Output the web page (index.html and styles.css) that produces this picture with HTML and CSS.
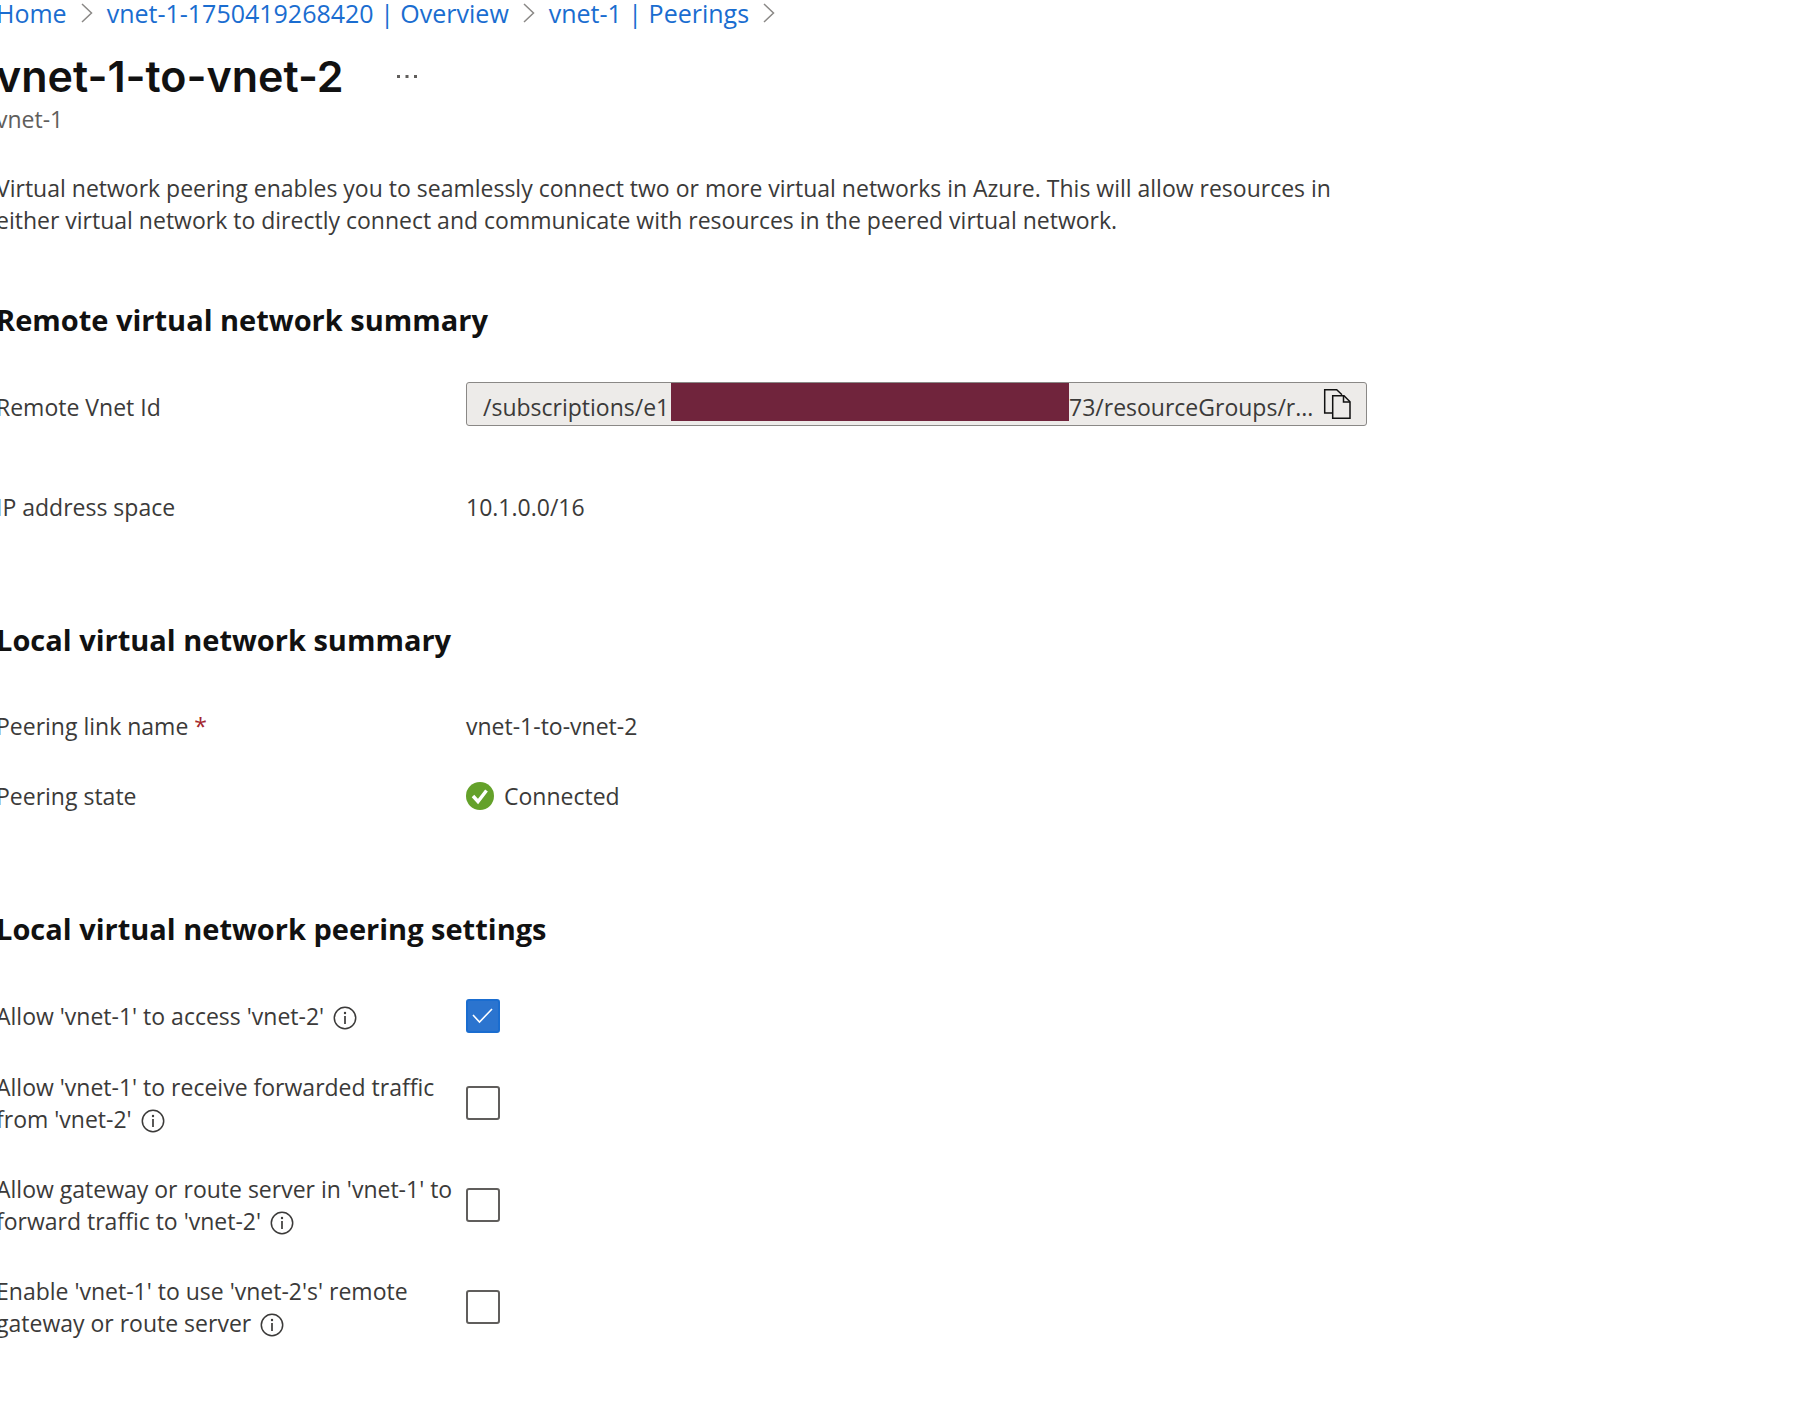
FILE: index.html
```html
<!DOCTYPE html>
<html lang="en">
<head>
<meta charset="utf-8">
<meta name="viewport" content="width=device-width, initial-scale=1">
<title>vnet-1-to-vnet-2</title>
<link rel="stylesheet" href="styles.css">
</head>
<body>
<svg class="defs" aria-hidden="true">
  <symbol id="chevron" viewBox="0 0 12 20"><path d="M1 1l9.500 9L1 19" fill="none" stroke="#8a8886" stroke-width="1.500"/></symbol>
  <symbol id="info" viewBox="0 0 24 24"><circle cx="12" cy="12" r="10.700" fill="none" stroke="#3b3a39" stroke-width="1.500"/><path d="M12 10v8" stroke="#3b3a39" stroke-width="1.700"/><circle cx="12" cy="7" r="1.200" fill="#3b3a39"/></symbol>
</svg>
<div class="blade">
  <nav class="breadcrumb" aria-label="Breadcrumb">
    <a href="#">Home</a>
    <svg class="chevron"><use href="#chevron"/></svg>
    <a href="#">vnet-1-1750419268420 | Overview</a>
    <svg class="chevron"><use href="#chevron"/></svg>
    <a href="#">vnet-1 | Peerings</a>
    <svg class="chevron"><use href="#chevron"/></svg>
  </nav>
  <header class="header">
    <div class="title-row">
      <h1 class="title">vnet-1-to-vnet-2</h1>
      <button class="more" type="button" aria-label="More">
        <svg width="22" height="4" viewBox="0 0 22 4"><path d="M1 1h3v3H1zM9.500 1h3v3h-3zM18 1h3v3h-3z" fill="#605e5c"/></svg>
      </button>
    </div>
    <p class="subtitle">vnet-1</p>
  </header>
  <main>
    <p class="description">Virtual network peering enables you to seamlessly connect two or more virtual networks in Azure. This will allow resources in either virtual network to directly connect and communicate with resources in the peered virtual network.</p>

    <section class="section section-first">
      <h2 class="heading">Remote virtual network summary</h2>
      <div class="rows rows-remote">
        <div class="row">
          <label class="label" for="vnet-id">Remote Vnet Id</label>
          <div class="field">
            <input class="id-start" id="vnet-id" type="text" value="/subscriptions/e1" readonly>
            <span class="redacted"></span>
            <input class="id-end" type="text" value="73/resourceGroups/r..." aria-label="Remote Vnet Id, end" readonly>
            <button class="copy" type="button" aria-label="Copy">
              <svg width="28" height="32" viewBox="0 0 28 32" fill="none" stroke="#111" stroke-width="1.500"><path d="M9.500 25H1.700V1.700h12l5.300 5"/><path d="M9.700 7.700h11.300l6 6v16.500H9.700z"/><path d="M20.500 8v6H27"/></svg>
            </button>
          </div>
        </div>
        <div class="row">
          <span class="label">IP address space</span>
          <span>10.1.0.0/16</span>
        </div>
      </div>
    </section>

    <section class="section">
      <h2 class="heading">Local virtual network summary</h2>
      <div class="rows">
        <div class="row">
          <span class="label">Peering link name <span class="required">*</span></span>
          <span>vnet-1-to-vnet-2</span>
        </div>
        <div class="row">
          <span class="label">Peering state</span>
          <span class="status">
            <svg width="28" height="28" viewBox="0 0 28 28"><circle cx="14" cy="14" r="14" fill="#64a12a"/><path d="M7 14l5 5.500 8.500-11" fill="none" stroke="#fff" stroke-width="3.400"/></svg>
            Connected
          </span>
        </div>
      </div>
    </section>

    <section class="section">
      <h2 class="heading">Local virtual network peering settings</h2>
      <div class="rows">
        <div class="row">
          <label class="label" for="access">Allow 'vnet-1' to access 'vnet-2' <svg class="info"><use href="#info"/></svg></label>
          <input class="check" id="access" type="checkbox" checked>
        </div>
        <div class="row">
          <label class="label" for="receive">Allow 'vnet-1' to receive forwarded traffic from 'vnet-2' <svg class="info"><use href="#info"/></svg></label>
          <input class="check" id="receive" type="checkbox">
        </div>
        <div class="row">
          <label class="label" for="gateway">Allow gateway or route server in 'vnet-1' to forward traffic to 'vnet-2' <svg class="info"><use href="#info"/></svg></label>
          <input class="check" id="gateway" type="checkbox">
        </div>
        <div class="row">
          <label class="label" for="remote">Enable 'vnet-1' to use 'vnet-2's' remote gateway or route server <svg class="info"><use href="#info"/></svg></label>
          <input class="check" id="remote" type="checkbox">
        </div>
      </div>
    </section>
  </main>
</div>
</body>
</html>
```

FILE: styles.css
```css
* {
  box-sizing: border-box;
}

body {
  margin: 0;
  overflow-x: hidden;
  background: #fff;
  color: #3b3a39;
  font: 23px/32px "Open Sans", "Noto Sans", sans-serif;
}

h1, h2, p {
  margin: 0;
}

button, input {
  margin: 0;
  padding: 0;
  border: 0;
  background: none;
  color: inherit;
  font: inherit;
}

.defs {
  position: absolute;
  width: 0;
  height: 0;
}

.blade {
  margin-left: -4px;
}

.breadcrumb {
  display: flex;
  align-items: center;
  gap: 14px;
  height: 26px;
  font-size: 25px;
}

.breadcrumb a {
  color: #1a6dd0;
  text-decoration: none;
}

.chevron {
  flex: none;
  width: 12px;
  height: 20px;
}

.header {
  margin-top: 23px;
}

.title-row {
  display: flex;
  align-items: center;
  gap: 52px;
}

.title {
  color: #111;
  font: 600 43px/54px Inter, sans-serif;
}

.more {
  display: flex;
}

.subtitle {
  color: #605e5c;
}

.description {
  max-width: 1368px;
  margin-top: 37px;
}

.section {
  margin-top: 99px;
}

.section-first {
  margin-top: 66px;
}

.heading {
  color: #111;
  font-size: 29px;
  font-weight: 700;
  line-height: 36px;
}

.rows {
  display: grid;
  gap: 38px;
  margin-top: 52px;
}

.rows-remote {
  gap: 65px;
  margin-top: 44px;
}

.row {
  display: grid;
  grid-template-columns: 470px minmax(0, 901px);
  align-items: center;
}

.rows-remote .row {
  align-items: baseline;
}

.required {
  color: #a4262c;
}

.field {
  display: flex;
  align-items: center;
  height: 44px;
  border: 1px solid #8a8886;
  border-radius: 3px;
  background: #edebe9;
}

.id-start,
.id-end {
  padding-top: 5px;
}

.id-start {
  width: 204px;
  padding-left: 16px;
}

.redacted {
  flex: none;
  align-self: flex-start;
  width: 398px;
  height: 38px;
  background: #70243c;
}

.id-end {
  flex: 1;
  min-width: 0;
}

.copy {
  display: flex;
  margin-right: 15px;
}

.status {
  display: flex;
  align-items: center;
  gap: 10px;
}

.info {
  width: 24px;
  height: 24px;
  margin-left: 3px;
  vertical-align: -5px;
}

.check {
  appearance: none;
  width: 34px;
  height: 34px;
  border: 2px solid #605e5c;
  border-radius: 3px;
}

.check:checked {
  border-color: #1a6dd0;
  background: #2b74cf url("data:image/svg+xml,%3Csvg xmlns='http://www.w3.org/2000/svg' viewBox='0 0 30 30'%3E%3Cpath d='M5 14l6.500 7L24 8' fill='none' stroke='white' stroke-width='1.600'/%3E%3C/svg%3E");
}
```
